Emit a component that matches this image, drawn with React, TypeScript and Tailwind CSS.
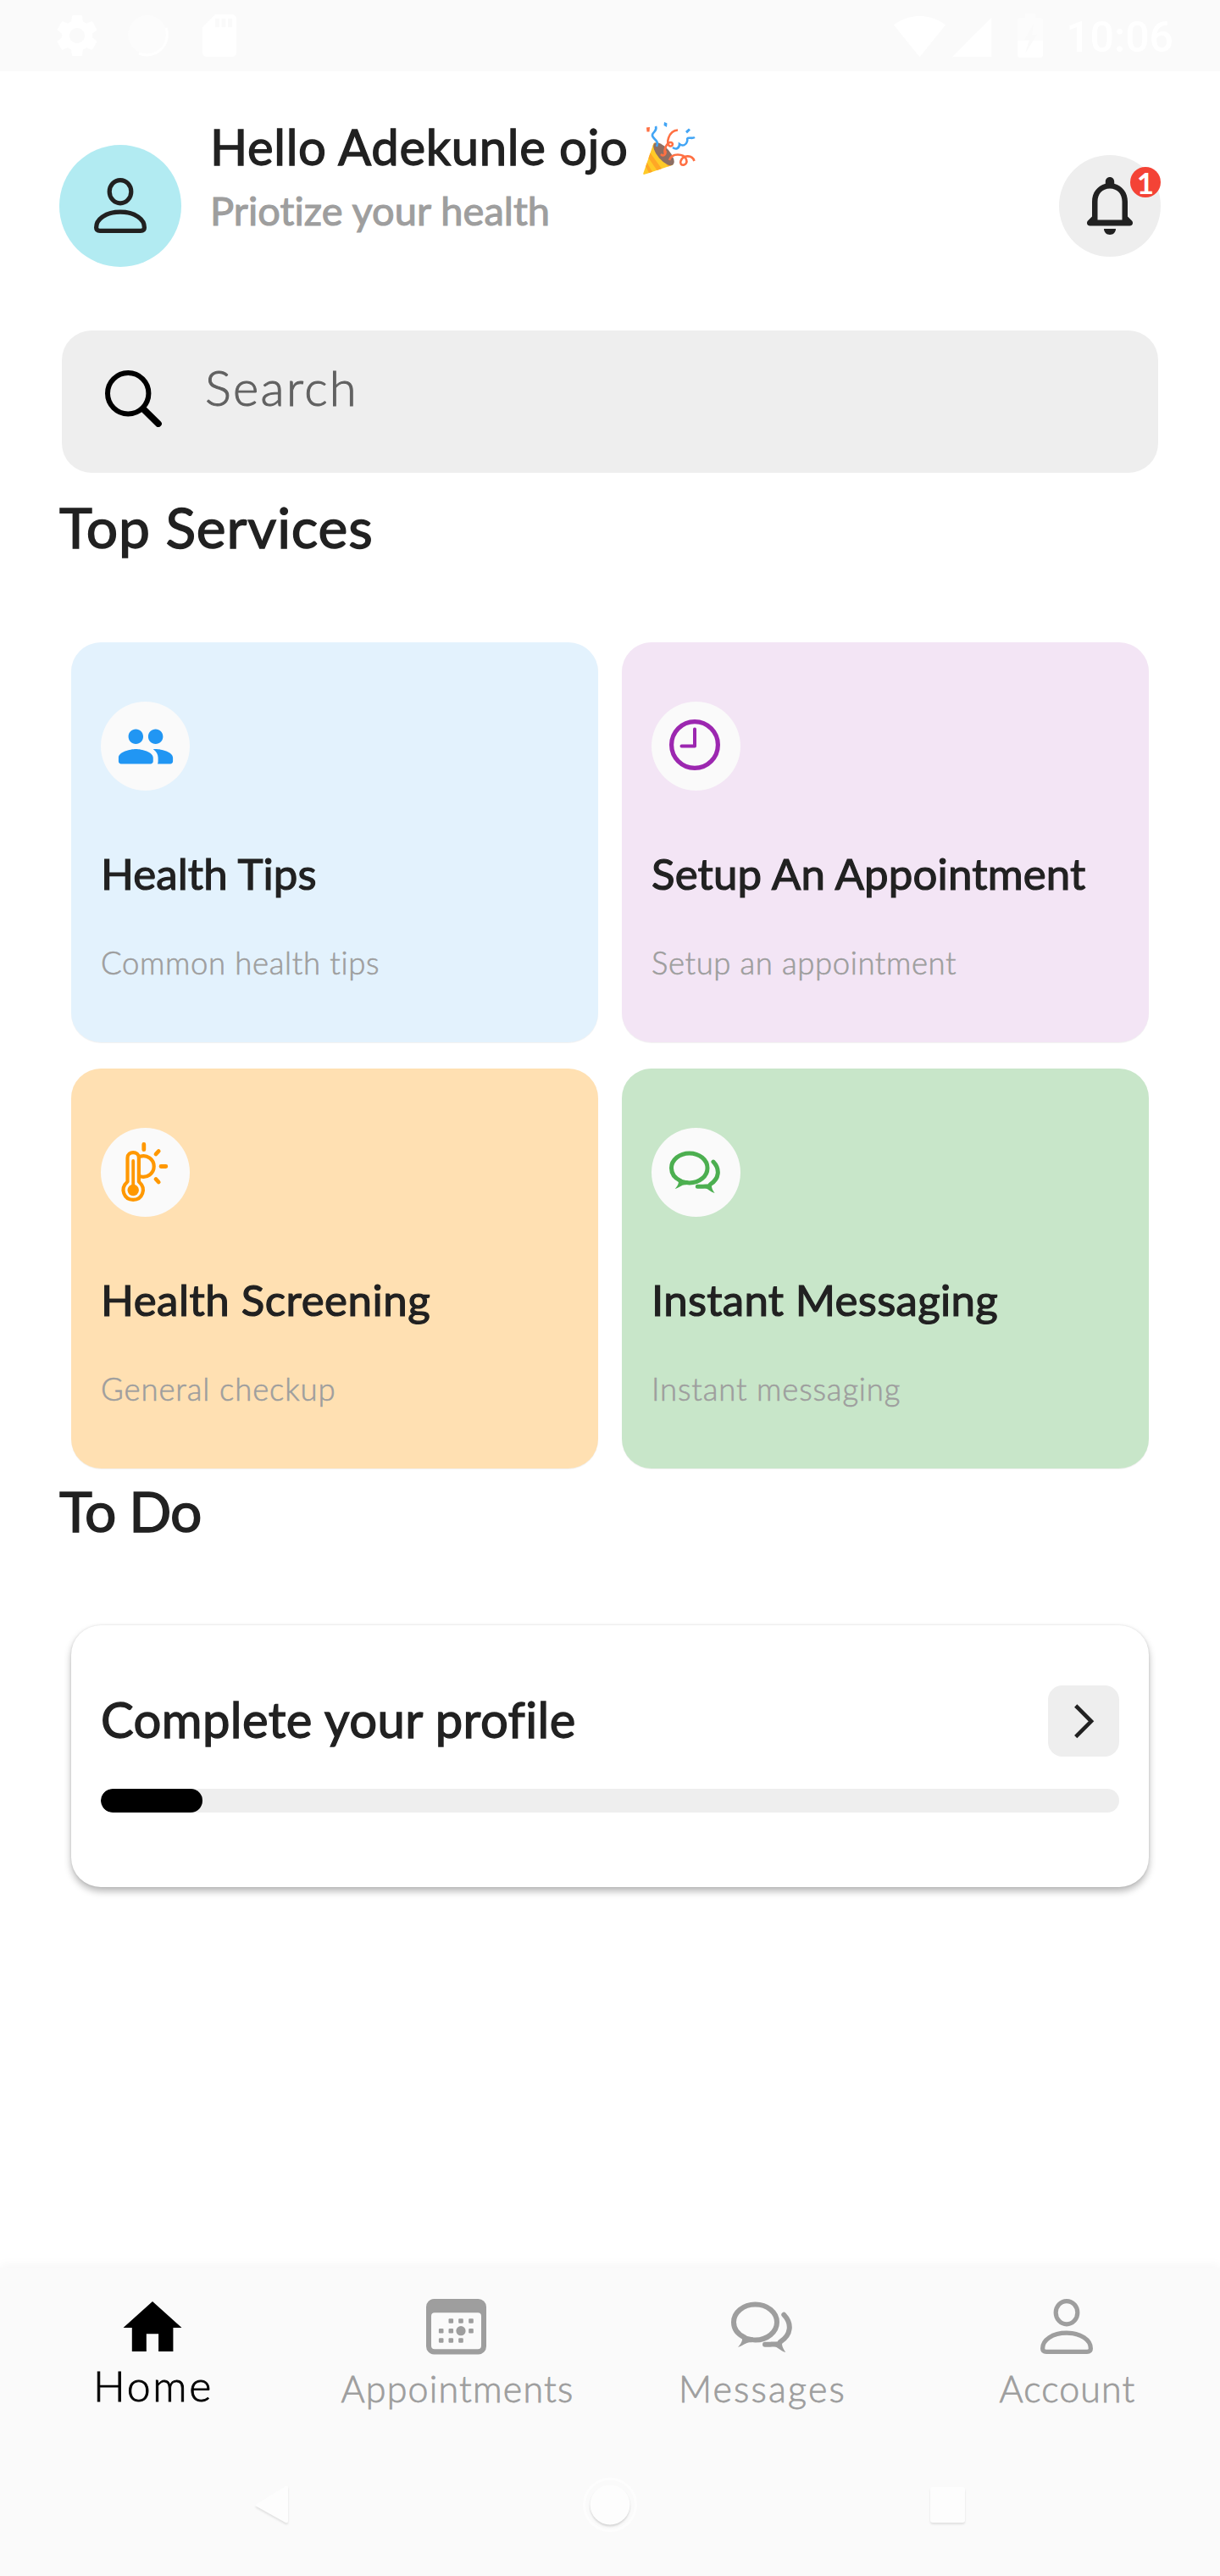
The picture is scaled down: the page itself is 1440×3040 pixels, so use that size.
import type { ReactNode } from "react";
import { MdSettings, MdSdCard, MdSignalWifi4Bar, MdSignalCellular4Bar } from "react-icons/md";

function StatusBar() {
  return (
    <div className="flex h-[84px] justify-between bg-[#fafafa] pl-[61px] pr-[55px] text-white">
      <div className="flex h-[84px] items-center">
        <MdSettings className="size-[60px]" />
        <svg className="ml-[29px] h-[50px] w-[50px]" viewBox="0 0 50 50" fill="none">
          <circle cx="24" cy="24" r="23" fill="#fcfcfc" />
          <path d="M46 16A24 24 0 0 1 14 46" stroke="#fff" strokeWidth="3" />
        </svg>
        <MdSdCard className="ml-[29px] size-[60px]" />
      </div>
      <div className="flex h-[84px] items-center">
        <MdSignalWifi4Bar className="size-[63px]" />
        <MdSignalCellular4Bar className="ml-[2px] mt-1 size-[56px]" />
        <svg className="ml-[26px] h-[52px] w-[30px]" viewBox="0 0 30 52">
          <path d="M9 0h12v5h6a3 3 0 0 1 3 3v24H0V8a3 3 0 0 1 3-3h6z" fill="#fcfcfc" />
          <path d="M0 32h30v17a3 3 0 0 1-3 3H3a3 3 0 0 1-3-3z" fill="#fff" />
          <path d="M19 12 8 31h6l-5 16 14-22h-6z" fill="#fafafa" />
        </svg>
        <span className="ml-[27px] pt-[3px] font-['Roboto'] text-[50px] font-medium leading-[60px]">10:06</span>
      </div>
    </div>
  );
}

function PersonIcon({ className }: { className: string }) {
  return (
    <svg className={className} viewBox="0 0 62 65" fill="none" stroke="currentColor" strokeWidth="5.2" strokeLinejoin="round">
      <ellipse cx="31" cy="16.2" rx="12.8" ry="13.6" />
      <path d="M7 62.3h48c2.800 0 4.400-1.300 4.400-3.900C59.400 48.500 48 40.200 31 40.200S2.600 48.500 2.600 58.400c0 2.600 1.600 3.900 4.400 3.900z" />
    </svg>
  );
}

function PartyPopper() {
  return (
    <svg className="h-[64px] w-[62px]" viewBox="0 0 62 64" fill="none">
      <path d="M12.500 26 .3 61.500c-.3 1 .6 1.700 1.500 1.300L35.500 51.500z" fill="#ffca28" />
      <path d="M8.500 37.500 22 56l-5.500 1.900L6.500 43.500zM11.500 29l18 24.400 4.500-1.600-20-27z" fill="#ffa726" />
      <path d="M4.600 49 11 59.800l-4 1.300-3.800-7.600z" fill="#ffa726" />
      <ellipse cx="24.500" cy="38.700" rx="7.200" ry="16.600" transform="rotate(-41 24.500 38.700)" fill="#8d6e63" />
      <path d="M26 39c-2-7 3-14 6.500-14 3.500 0 3 5-.5 4.500C26 28 30 11 41 10.500" stroke="#ff7043" strokeWidth="2.600" />
      <path d="M21 39c3 3 6 1 5.500-4" stroke="#ff7043" strokeWidth="2.600" />
      <path d="M31 46c3-9 17-8 20-1 3 8-9 9-6.500 2C47 40 58 39 60.500 47" stroke="#ff7043" strokeWidth="2.600" />
      <path d="M16 30c4-8-6-9-5-14 1-4 6-4 4-10" stroke="#42a5f5" strokeWidth="2.600" />
      <path d="M35 31c4 3 8 1 8-4 4 3 8 1 9-3 1-3-1-3 1-4s5 1 8-1" stroke="#42a5f5" strokeWidth="2.600" />
      <path d="m25 1 3.500 1.500L28 7l-3.500-2zM50 12l4-3.500 2 2-4 4z" fill="#42a5f5" />
      <path d="m4 7.500 4-.5-.5 5.500-3 0z" fill="#ff7043" />
    </svg>
  );
}

function BellIcon() {
  return (
    <svg className="h-[68px] w-[54px]" viewBox="0 0 54 68">
      <path
        fillRule="evenodd"
        fill="#212121"
        d="M27 0c3 0 5 2.200 5.200 5.200v2.600C42 10.500 48 18.500 48 29v17.500l5 5c2.200 2.600.6 6-2.600 6H3.600c-3.200 0-4.800-3.400-2.600-6l5-5V29C6 18.500 12 10.500 21.800 7.800V5.200C22 2.200 24 0 27 0zm0 13.500c-8.800 0-14.500 6.300-14.500 15.500v21.500h29V29c0-9.200-5.700-15.500-14.500-15.500z"
      />
      <path fill="#212121" d="M20 61h14c0 4.200-3 7-7 7s-7-2.800-7-7z" />
    </svg>
  );
}

function Header() {
  return (
    <header className="flex h-[306px] items-start px-[70px]">
      <div className="mt-[87px] flex size-[144px] shrink-0 items-center justify-center rounded-full bg-[#b2ebf2] text-[#212121]">
        <PersonIcon className="mb-[2px] mr-[1px] h-[65px] w-[62px]" />
      </div>
      <div className="ml-[34px] mt-[55px]">
        <div className="flex">
          <h1 className="text-[58px] leading-[67px] tracking-[0.65px] text-[#212121] [-webkit-text-stroke:1.3px_#212121]">Hello Adekunle ojo</h1>
          <div className="ml-[17px] mt-[4px]">
            <PartyPopper />
          </div>
        </div>
        <p className="mt-[12px] text-[47px] leading-[58px] tracking-[0.05px] text-[#9e9e9e] [-webkit-text-stroke:1.1px_#9e9e9e]">Priotize your health</p>
      </div>
      <div className="relative ml-auto mt-[99px] flex size-[120px] items-center justify-center rounded-full bg-[#eeeeee]">
        <BellIcon />
        <span className="absolute right-0 top-[14px] flex size-[36px] items-center justify-center rounded-full bg-[#f44336] text-[35px] font-bold leading-[36px] text-white">
          1
        </span>
      </div>
    </header>
  );
}

function SearchBar() {
  return (
    <div className="mx-[73px] flex h-[168px] items-start rounded-[35px] bg-[#eeeeee]">
      <svg className="ml-[51px] mt-[47px] h-[67px] w-[67px]" viewBox="0 0 67 67" fill="none" stroke="#000">
        <circle cx="27.200" cy="27.200" r="24.200" strokeWidth="6" />
        <path d="M45 45.500 62.800 63" strokeWidth="8" strokeLinecap="round" />
      </svg>
      <span className="ml-[51px] mt-[33px] text-[58px] font-light leading-[68px] tracking-[2.3px] text-[#616161] [-webkit-text-stroke:1px_#616161]">
        Search
      </span>
    </div>
  );
}

function PeopleIcon() {
  return (
    <svg className="size-[70px]" viewBox="0 0 24 24" fill="#2196f3">
      <path d="M16 11c1.660 0 2.990-1.340 2.990-3S17.660 5 16 5s-3 1.340-3 3 1.340 3 3 3zm-8 0c1.660 0 2.990-1.340 2.990-3S9.660 5 8 5 5 6.340 5 8s1.340 3 3 3zm0 2c-2.330 0-7 1.170-7 3.500V18c0 .55.45 1 1 1h12c.55 0 1-.45 1-1v-1.500c0-2.330-4.670-3.500-7-3.500zm8 0c-.29 0-.62.02-.97.05.02.01.03.03.04.04 1.140.83 1.930 1.940 1.930 3.410V18c0 .35-.07.69-.18 1H22c.55 0 1-.45 1-1v-1.500c0-2.330-4.670-3.500-7-3.500z" />
    </svg>
  );
}

function ClockIcon() {
  return (
    <svg className="mb-[3px] mr-[3px] size-[60px]" viewBox="0 0 60 60" fill="none" stroke="#9c27b0">
      <circle cx="30" cy="30" r="27.400" strokeWidth="5.200" />
      <path d="M30 11.500v20H14.500" strokeWidth="4" strokeLinecap="round" strokeLinejoin="round" />
    </svg>
  );
}

function ThermometerIcon() {
  return (
    <svg className="mb-[1px] mr-[3px] h-[70px] w-[56px] overflow-visible" viewBox="0 0 56 70" fill="none" stroke="#ff9800" strokeWidth="4.200" strokeLinecap="round">
      <path d="M8.500 46.500V18.400c0-8.400 13.400-8.400 13.400 0v28.100c9.500 8.500 4 21.400-6.700 21.400S-1 55 8.500 46.500z" strokeLinejoin="round" />
      <path d="M15.200 22v30" strokeWidth="3.800" />
      <circle cx="15.200" cy="56.500" r="6.700" fill="#ff9800" stroke="none" />
      <path d="M23.500 16.800c8-2.500 16.200 3.300 16.200 11.700s-8.200 14.200-16.200 11.700" />
      <path d="M27.800 2.500v6.200M42 14l3.200-3.500M48 28.500h5.800M42 43.500l3.200 3.500" strokeWidth="4.800" />
    </svg>
  );
}

function ChatIcon({ className }: { className: string }) {
  return (
    <svg className={className} viewBox="0 0 72 60" fill="none" stroke="currentColor" strokeWidth="6" strokeLinecap="round">
      <path d="M15.800 42.500C7.500 38.500 3 32 3 24.500 3 12.900 14.400 3.500 28.500 3.500S54 12.900 54 24.500 42.600 45.500 28.500 45.500c-2.500 0-4.500-.4-6.500-.6" />
      <path d="M62.300 15.700c9.500 10 9 23.500-4.300 32" />
      <path d="M40 50.800h5c3-.1 5-.6 8.500-.3" />
      <path d="M11 41c3.500 3 2.500 6.500-3 13 6.500-1.800 10-6.800 16-5.600l2-5.800-9-2.100zM61.500 45.500c-2.500 3.500-2 7.500 2.800 14.500-7-2-9-6.500-14.300-7l3-5z" fill="currentColor" stroke="none" />
    </svg>
  );
}

interface ServiceCardProps {
  card: string;
  icon: ReactNode;
  title: string;
  titleTracking: string;
  subtitle: string;
  subtitleTracking: string;
}

function ServiceCard({ card, icon, title, titleTracking, subtitle, subtitleTracking }: ServiceCardProps) {
  return (
    <div className={`h-[472px] rounded-[35px] px-[35px] pt-[70px] shadow-[0_1px_1px_rgba(0,0,0,0.06)] ${card}`}>
      <div className="flex size-[105px] items-center justify-center rounded-full bg-[#fafafa]">{icon}</div>
      <h3 className={`mt-[67px] whitespace-nowrap text-[51px] leading-[62px] text-[#212121] [-webkit-text-stroke:1.2px_#212121] ${titleTracking}`}>{title}</h3>
      <p
        className={`mt-[53px] whitespace-nowrap text-[36.5px] font-light leading-[42px] text-[#9e9e9e] [-webkit-text-stroke:0.6px_#9e9e9e] ${subtitleTracking}`}
      >
        {subtitle}
      </p>
    </div>
  );
}

function TodoCard() {
  return (
    <div className="mx-[84px] mt-[95px] h-[309px] rounded-[35px] bg-white px-[35px] pt-[71px] shadow-[0_5px_9px_rgba(0,0,0,0.28),0_0_3px_rgba(0,0,0,0.1)]">
      <div className="flex h-[84px] items-start justify-between">
        <h3 className="text-[58px] leading-[80px] tracking-[0.4px] text-[#212121] [-webkit-text-stroke:1.3px_#212121]">Complete your profile</h3>
        <button className="flex size-[84px] items-center justify-center rounded-[17px] bg-[#eeeeee]">
          <svg className="size-[84px]" viewBox="0 0 84 84" fill="none" stroke="#212121" strokeWidth="4.600">
            <path d="M32.700 24 51 42.300 32.700 60.600" />
          </svg>
        </button>
      </div>
      <div className="mt-[38px] h-[28px] overflow-hidden rounded-full bg-[#eeeeee]">
        <div className="h-full w-1/10 rounded-full bg-black" />
      </div>
    </div>
  );
}

function HomeIcon() {
  return (
    <svg className="h-[59px] w-[70px]" viewBox="0 0 70 59" fill="#000">
      <path d="M35 0 69.500 31H59.400v28H42.100V38.300H27.800V59H10.800V31H.5z" />
    </svg>
  );
}

function CalendarIcon() {
  const dots: [number, number][] = [
    [29.300, 26], [41, 26], [53, 26],
    [17.700, 37.700], [29.300, 37.700], [53, 37.700],
    [17.700, 49], [29.300, 49], [41, 49],
  ];
  return (
    <svg className="mr-[3px] h-[66px] w-[71px]" viewBox="0 0 71 66" fill="currentColor">
      <path
        fillRule="evenodd"
        d="M9.500 0h52a9.500 9.500 0 0 1 9.500 9.500v46.500a9.500 9.500 0 0 1-9.500 9.500h-52A9.500 9.500 0 0 1 0 56V9.500A9.500 9.500 0 0 1 9.500 0zM10 16.300a4 4 0 0 0-4 4v35a4 4 0 0 0 4 4h51a4 4 0 0 0 4-4v-35a4 4 0 0 0-4-4z"
      />
      {dots.map(([x, y]) => (
        <rect key={`${x}-${y}`} x={x - 2.8} y={y - 2.8} width="5.600" height="5.600" rx="1.200" />
      ))}
      <circle cx="41" cy="37.700" r="5.600" />
    </svg>
  );
}

function NavItem({ icon, label, tracking }: { icon: ReactNode; label: string; tracking: string }) {
  return (
    <div className="flex flex-col items-center text-[#9e9e9e]">
      <div className="flex h-[67px] items-center">{icon}</div>
      <span className={`mt-[15px] text-[43px] font-light leading-[50px] [-webkit-text-stroke:0.8px_#9e9e9e] ${tracking}`}>{label}</span>
    </div>
  );
}

function BottomNav() {
  return (
    <nav className="grid h-[248px] grid-cols-4 pt-[36px]">
      <div className="flex flex-col items-center">
        <div className="flex h-[67px] items-center">
          <HomeIcon />
        </div>
        <span className="mt-[6px] pl-[2px] text-[50px] font-light leading-[60px] tracking-[2.7px] text-black [-webkit-text-stroke:0.9px_#000]">Home</span>
      </div>
      <NavItem icon={<CalendarIcon />} label="Appointments" tracking="tracking-[1.2px]" />
      <NavItem icon={<ChatIcon className="mr-[2px] h-[60px] w-[72px]" />} label="Messages" tracking="tracking-[2.2px]" />
      <NavItem icon={<PersonIcon className="mr-[2px] h-[65px] w-[62px]" />} label="Account" tracking="tracking-[1.1px]" />
    </nav>
  );
}

function SystemNav() {
  return (
    <div className="flex justify-center gap-[335px]">
      <svg className="size-[64px] drop-shadow-[0_2px_1px_rgba(0,0,0,0.1)]" viewBox="0 0 64 64">
        <path d="M14 31 48 10q3-1 3 2v39q0 3-3 2L14 34q-3-1.500 0-3z" fill="#fdfdfd" />
      </svg>
      <svg className="size-[64px]" viewBox="0 0 64 64">
        <circle cx="32" cy="32" r="30.500" fill="none" stroke="#fdfdfd" strokeWidth="3" />
        <circle className="drop-shadow-[0_2px_1px_rgba(0,0,0,0.15)]" cx="32" cy="32" r="23.500" fill="#fdfdfd" />
      </svg>
      <svg className="size-[64px] drop-shadow-[0_2px_1px_rgba(0,0,0,0.1)]" viewBox="0 0 64 64">
        <rect x="11" y="11" width="41" height="42" rx="3" fill="#fdfdfd" />
      </svg>
    </div>
  );
}

export default function App() {
  return (
    <div className="flex h-[3040px] w-[1440px] flex-col bg-white font-['Lato',sans-serif]">
      <StatusBar />
      <Header />
      <SearchBar />
      <h2 className="ml-[70px] mt-[24px] text-[66px] leading-[80px] tracking-[0.8px] text-[#212121] [-webkit-text-stroke:1.4px_#212121]">Top Services</h2>
      <section className="mt-[96px] grid grid-cols-2 gap-x-[28px] gap-y-[31px] px-[84px]">
        <ServiceCard card="bg-[#e3f2fd]" icon={<PeopleIcon />} title="Health Tips" titleTracking="tracking-[0.1px]" subtitle="Common health tips" subtitleTracking="tracking-[0.65px]" />
        <ServiceCard card="bg-[#f3e5f5]" icon={<ClockIcon />} title="Setup An Appointment" titleTracking="tracking-[0.15px]" subtitle="Setup an appointment" subtitleTracking="tracking-[0.6px]" />
        <ServiceCard card="bg-[#ffe0b2]" icon={<ThermometerIcon />} title="Health Screening" titleTracking="tracking-[0.5px]" subtitle="General checkup" subtitleTracking="tracking-[0.9px]" />
        <ServiceCard card="bg-[#c8e6c9]" icon={<ChatIcon className="mb-[2px] mr-[3px] h-[50px] w-[60px] text-[#4caf50]" />} title="Instant Messaging" titleTracking="tracking-[0.28px]" subtitle="Instant messaging" subtitleTracking="tracking-[0.85px]" />
      </section>
      <h2 className="ml-[70px] mt-[10px] text-[66px] leading-[80px] tracking-[-1px] text-[#212121] [-webkit-text-stroke:1.4px_#212121]">To Do</h2>
      <TodoCard />
      <div className="mt-auto h-[364px] bg-[#fafafa] shadow-[0_-3px_12px_rgba(0,0,0,0.04)]">
        <BottomNav />
        <SystemNav />
      </div>
    </div>
  );
}
